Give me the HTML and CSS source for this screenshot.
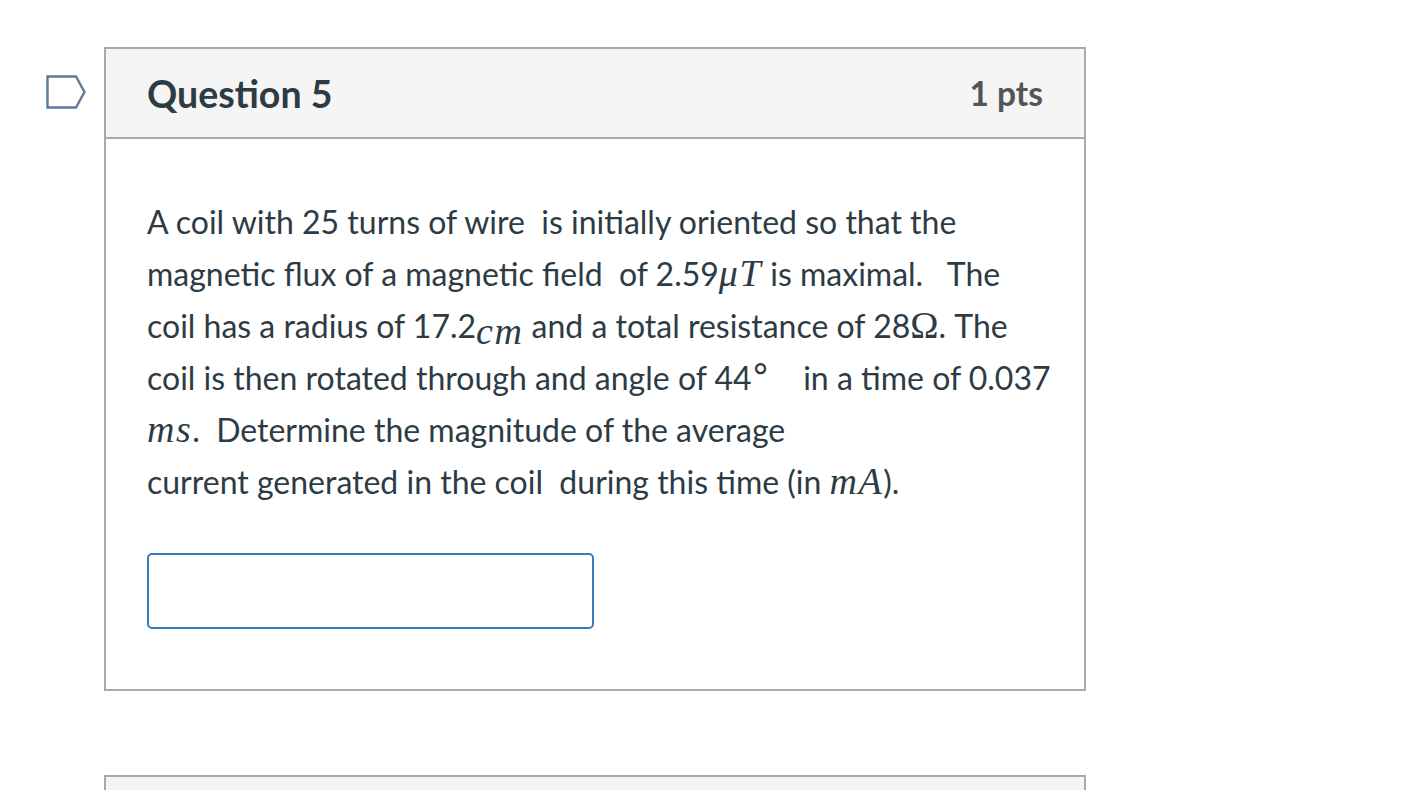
FILE: index.html
```html
<!DOCTYPE html>
<html lang="en">
<head>
<meta charset="utf-8">
<title>Question 5</title>
<link rel="stylesheet" href="styles.css">
</head>
<body>
<main class="quiz">
  <div class="question-row">
    <div class="flag" aria-label="Flag question">
      <svg width="42" height="34" viewBox="0 0 42 34">
        <path d="M1.5 1.5 H30 L38.5 17 L30 32.5 H1.5 Z" fill="none" stroke="#5b7b9c" stroke-width="2.4" stroke-linejoin="miter"/>
      </svg>
    </div>
    <section class="question">
      <header class="question-header">
        <h2 class="question-title">Question 5</h2>
        <span class="question-points">1 pts</span>
      </header>
      <div class="question-body">
        <p class="question-text">A coil with 25 turns of wire &nbsp;is initially oriented so that the<br>magnetic flux of a magnetic field &nbsp;of 2.59<span class="m">μT</span> is maximal. &nbsp; The<br>coil has a radius of 17.2<span class="m low">cm</span> and a total resistance of 28<span class="m up">Ω</span>. The<br>coil is then rotated through and angle of 44<span class="deg">∘</span> &nbsp; in a time of 0.037<br><span class="m">ms</span>. &nbsp;Determine the magnitude of the average<br>current generated in the coil &nbsp;during this time (in <span class="m">mA</span>).</p>
        <input class="answer" type="text" aria-label="Answer">
      </div>
    </section>
  </div>
  <div class="question-row">
    <div class="flag"></div>
    <section class="question">
      <header class="question-header"></header>
    </section>
  </div>
</main>
</body>
</html>
```

FILE: styles.css
```css
html, body {
  margin: 0;
  padding: 0;
  background: #ffffff;
}

body {
  font-family: Lato, "Open Sans", sans-serif;
  color: #2d3b45;
}

.quiz {
  padding: 47px 0 0 46px;
  display: flex;
  flex-direction: column;
  gap: 84px;
}

.question-row {
  display: flex;
  align-items: flex-start;
  gap: 16px;
}

.flag {
  width: 42px;
  flex: none;
  padding-top: 28px;
  line-height: 0;
}

.question {
  width: 978px;
  border: 2px solid #aaaaaa;
  background: #ffffff;
}

.question-header {
  height: 90px;
  background: #f5f5f5;
  border-bottom: 2px solid #aaaaaa;
  display: flex;
  align-items: center;
  justify-content: space-between;
  padding: 0 41px;
  box-sizing: border-box;
}

.question-title {
  margin: 0;
  font-size: 37.5px;
  font-weight: 700;
  color: #2d3b45;
}

.question-points {
  font-size: 33.5px;
  font-weight: 700;
  color: #555555;
}

.question-body {
  padding: 57px 20px 60px 41px;
}

.question-text {
  margin: 0;
  font-size: 32px;
  line-height: 52px;
  white-space: nowrap;
}

.m {
  font-family: "Liberation Serif", "DejaVu Serif", serif;
  font-style: italic;
  font-size: 38px;
  line-height: 0;
  letter-spacing: 1.5px;
}

.m.low {
  vertical-align: -6px;
}

.m.up {
  font-style: normal;
  letter-spacing: 0;
}

.deg {
  display: inline-flex;
  justify-content: center;
  width: 16px;
  font-family: "DejaVu Sans", sans-serif;
  font-size: 36px;
  line-height: 0;
  vertical-align: 10px;
  margin-left: 1px;
  margin-right: 10px;
}

.answer {
  display: block;
  margin-top: 45px;
  width: 447px;
  height: 76px;
  box-sizing: border-box;
  border: 2px solid #3a7bb9;
  border-radius: 5px;
  font-size: 28px;
  font-family: Lato, sans-serif;
  padding: 0 12px;
  outline: none;
  background: #ffffff;
}
```
